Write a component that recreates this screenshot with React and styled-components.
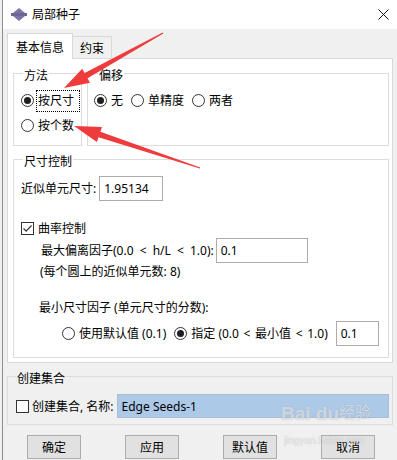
import React from 'react'
import styled, { createGlobalStyle } from 'styled-components'

const Global = createGlobalStyle`
  html, body { margin: 0; padding: 0; background: #f0f0f0; }
  body {
    font-family: "Noto Sans", "Noto Sans CJK SC", sans-serif;
    font-size: 12px;
    color: #000;
  }
`

const Screen = styled.div`
  position: relative;
  width: 397px;
  height: 460px;
  overflow: hidden;
  background: #f0f0f0;
`
const Window = styled.div`
  margin-left: 2px;
  border-left: 1px solid #8e8e8e;
  height: 460px;
`
const TitleBar = styled.div`
  height: 29px;
  background: #fff;
  display: flex;
  align-items: center;
  padding: 0 8px;
`
const TitleText = styled.span`
  flex: 1;
  margin-left: 5px;
  line-height: 17px;
`
const Body = styled.div`
  padding: 4px 4px 0 4px;
`
const TabBar = styled.div`
  display: flex;
  align-items: flex-end;
  height: 25px;
`
const Tab = styled.div`
  position: relative;
  z-index: 1;
  box-sizing: border-box;
  display: flex;
  align-items: center;
  height: ${p => (p.active ? 26 : 22)}px;
  margin-bottom: ${p => (p.active ? -1 : 0)}px;
  padding: ${p => (p.active ? '2px 8px 0' : '1px 7px 0')};
  background: ${p => (p.active ? '#fff' : '#f0f0f0')};
  border: 1px solid #d9d9d9;
  border-bottom: none;
  border-left: ${p => (p.active ? '1px solid #d9d9d9' : 'none')};
  line-height: 17px;
`
const Panel = styled.div`
  box-sizing: border-box;
  height: 305px;
  background: #fff;
  border: 1px solid #d9d9d9;
  padding: 14px 3px 4px 5px;
`
const GroupRow = styled.div`
  display: flex;
  gap: 5px;
`
const Group = styled.div`
  position: relative;
  box-sizing: border-box;
  height: ${p => p.h}px;
  width: ${p => (p.w ? `${p.w}px` : 'auto')};
  flex: ${p => (p.w ? 'none' : '1')};
  margin-top: ${p => p.top || 0}px;
  border: 1px solid #dcdcdc;
  padding: ${p => p.pad};
`
const Caption = styled.span`
  position: absolute;
  top: -7px;
  left: ${p => p.left}px;
  padding: 0 1px;
  line-height: 17px;
  background: ${p => p.bg};
`
const OptionRow = styled.div`
  display: flex;
  align-items: center;
  height: 25px;
  gap: ${p => p.gap || 0}px;
`
const Option = styled.div`
  display: flex;
  align-items: center;
`
const RadioDot = styled.span`
  box-sizing: border-box;
  width: 13px;
  height: 13px;
  flex: none;
  border: 1px solid #333;
  border-radius: 50%;
  background: #fff;
  display: flex;
  align-items: center;
  justify-content: center;
  &::after {
    content: '';
    display: ${p => (p.checked ? 'block' : 'none')};
    width: 7px;
    height: 7px;
    border-radius: 50%;
    background: #1f1f1f;
  }
`
const OptionLabel = styled.span`
  box-sizing: border-box;
  display: flex;
  align-items: center;
  height: 22px;
  margin-left: 2px;
  padding: 0 ${p => (p.focused ? 5 : 3)}px 0 1px;
  border: 1px ${p => (p.focused ? 'dotted #000' : 'solid transparent')};
  line-height: 17px;
  white-space: pre;
`
const Box = styled.span`
  box-sizing: border-box;
  width: 13px;
  height: 13px;
  flex: none;
  border: 1px solid #333;
  background: #fff;
  display: flex;
  align-items: center;
  justify-content: center;
`
const Line = styled.div`
  display: flex;
  align-items: center;
  gap: ${p => p.gap || 0}px;
  margin-top: ${p => p.top || 0}px;
  padding-left: ${p => p.indent || 0}px;
  line-height: 17px;
  white-space: pre;
`
const Formula = styled.span`
  word-spacing: 1.5px;
`
const Lt = styled.span`
  margin: 0 1.5px;
`
const Field = styled.div`
  box-sizing: border-box;
  display: flex;
  align-items: center;
  width: ${p => (p.w ? `${p.w}px` : 'auto')};
  flex: ${p => (p.w ? 'none' : '1')};
  height: ${p => p.h || 25}px;
  margin-right: ${p => p.right || 0}px;
  padding-left: 4px;
  background: ${p => p.bg || '#fff'};
  border: 1px solid ${p => (p.bg ? '#a9bdd4' : '#ababab')};
  line-height: 17px;
`
const ButtonRow = styled.div`
  display: flex;
  gap: 44px;
  margin-top: 10px;
  padding-left: 20px;
`
const Button = styled.button`
  box-sizing: border-box;
  width: 54px;
  height: 24px;
  padding: 0;
  font: inherit;
  color: #000;
  background: #e1e1e1;
  border: 1px solid #adadad;
`
const Overlay = styled.svg`
  position: absolute;
  left: 0;
  top: 0;
  pointer-events: none;
`
const Watermark = styled.div`
  position: absolute;
  left: ${p => p.x}px;
  top: ${p => p.y}px;
  font-family: "Liberation Sans", "Noto Sans CJK SC", sans-serif;
  font-size: ${p => p.size}px;
  font-weight: ${p => p.weight || 400};
  line-height: 1;
  color: rgba(255, 255, 255, 0.55);
  text-shadow: 0 0 1px rgba(120, 120, 120, 0.45);
  pointer-events: none;
  white-space: nowrap;
`

function Radio({ checked, focused, children }) {
  return (
    <Option>
      <RadioDot checked={checked} />
      <OptionLabel focused={focused}>{children}</OptionLabel>
    </Option>
  )
}

function Check({ checked }) {
  return (
    <Box>
      {checked && (
        <svg width="11" height="11" viewBox="0 0 11 11">
          <polyline points="1.5,5.5 4.2,8.2 9.5,2.5" fill="none" stroke="#333" strokeWidth="1.2" />
        </svg>
      )}
    </Box>
  )
}

function AppIcon() {
  return (
    <svg width="16" height="13" viewBox="0 0 16 13">
      <polygon points="8,0 14,5 2,5" fill="#7a76a8" />
      <rect x="0" y="5" width="16" height="3" fill="#6b6797" />
      <polygon points="2,8 14,8 8,13" fill="#7a76a8" />
    </svg>
  )
}

function Arrow({ tail, tip, base, head = 8, shaft = 3 }) {
  const dx = tip[0] - tail[0]
  const dy = tip[1] - tail[1]
  const len = Math.hypot(dx, dy)
  const ux = dx / len
  const uy = dy / len
  const nx = -uy
  const ny = ux
  const bx = tail[0] + ux * base
  const by = tail[1] + uy * base
  const pts = [
    [tail[0] + nx * 0.6, tail[1] + ny * 0.6],
    [bx + nx * shaft, by + ny * shaft],
    [bx + nx * head, by + ny * head],
    tip,
    [bx - nx * head, by - ny * head],
    [bx - nx * shaft, by - ny * shaft],
    [tail[0] - nx * 0.6, tail[1] - ny * 0.6],
  ]
  return <polygon points={pts.map(p => p.join(',')).join(' ')} fill="#ef3b3b" />
}

export default function App() {
  return (
    <Screen>
      <Global />
      <Window>
        <TitleBar>
          <AppIcon />
          <TitleText>局部种子</TitleText>
          <svg width="11" height="11" viewBox="0 0 11 11">
            <path d="M0.5 0.5 L10.5 10.5 M10.5 0.5 L0.5 10.5" stroke="#111" strokeWidth="1" />
          </svg>
        </TitleBar>

        <Body>
          <TabBar>
            <Tab active>基本信息</Tab>
            <Tab>约束</Tab>
          </TabBar>

          <Panel>
            <GroupRow>
              <Group w={69} h={73} pad="14px 0 0 7px">
                <Caption left={9} bg="#fff">方法</Caption>
                <OptionRow>
                  <Radio checked focused>按尺寸</Radio>
                </OptionRow>
                <OptionRow>
                  <Radio>按个数</Radio>
                </OptionRow>
              </Group>
              <Group h={73} pad="14px 0 0 6px">
                <Caption left={10} bg="#fff">偏移</Caption>
                <OptionRow gap={4}>
                  <Radio checked>无</Radio>
                  <Radio>单精度</Radio>
                  <Radio>两者</Radio>
                </OptionRow>
              </Group>
            </GroupRow>

            <Group h={199} top={13} pad="0 0 0 7px">
              <Caption left={9} bg="#fff">尺寸控制</Caption>
              <Line top={16} gap={3}>
                近似单元尺寸:
                <Field w={64}>1.95134</Field>
              </Line>
              <Line top={19} gap={4}>
                <Check checked />
                曲率控制
              </Line>
              <Line top={1} indent={20} gap={2}>
                <Formula>
                  最大偏离因子(0.0 <Lt>&lt;</Lt> h/L <Lt>&lt;</Lt> 1.0):
                </Formula>
                <Field w={92}>0.1</Field>
              </Line>
              <Line indent={19}>(每个圆上的近似单元数: 8)</Line>
              <Line top={19} indent={18}>最小尺寸因子 (单元尺寸的分数):</Line>
              <Line top={5} indent={41} gap={4}>
                <Radio>使用默认值 (0.1)</Radio>
                <Radio checked>
                  指定 (0.0 <Lt>&lt;</Lt> 最小值 <Lt>&lt;</Lt> 1.0)
                </Radio>
                <Field w={43}>0.1</Field>
              </Line>
            </Group>
          </Panel>

          <Group h={49} top={13} pad="17px 0 0 8px">
            <Caption left={8} bg="#f0f0f0">创建集合</Caption>
            <Line gap={3}>
              <Check />
              创建集合, 名称:
              <Field h={24} right={3} bg="#adc9e8">Edge Seeds-1</Field>
            </Line>
          </Group>

          <ButtonRow>
            <Button>确定</Button>
            <Button>应用</Button>
            <Button>默认值</Button>
            <Button>取消</Button>
          </ButtonRow>
        </Body>
      </Window>

      <Overlay width="397" height="460" viewBox="0 0 397 460">
        <Arrow tail={[163, 33]} tip={[64, 88]} base={88} />
        <Arrow tail={[200, 168]} tip={[74, 126]} base={106} />
      </Overlay>
      <Watermark x={281} y={404} size={19} weight={700}>Bai du</Watermark>
      <Watermark x={339} y={405} size={16}>经验</Watermark>
      <Watermark x={284} y={436} size={10}>jingyan.baidu.com</Watermark>
    </Screen>
  )
}
